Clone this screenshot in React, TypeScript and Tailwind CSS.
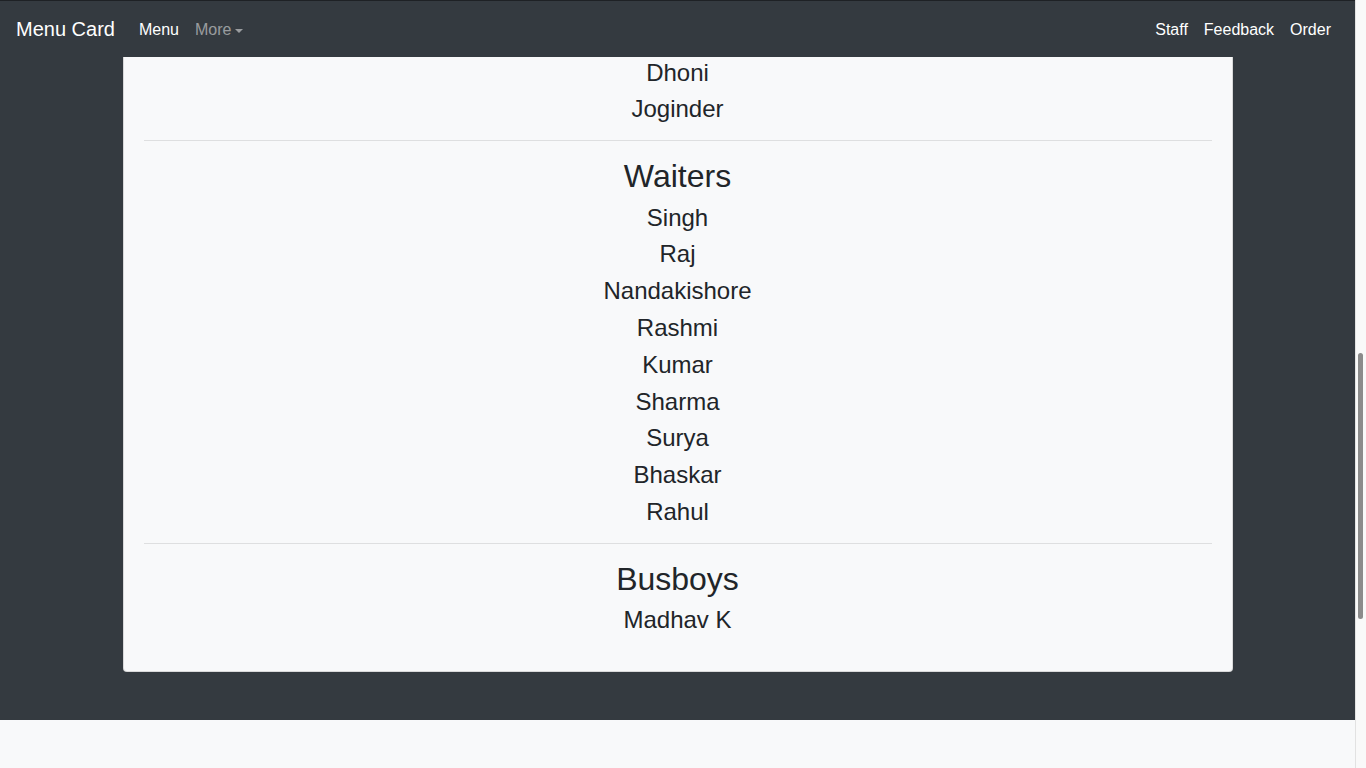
import React from "react";

const waiters = ["Singh", "Raj", "Nandakishore", "Rashmi", "Kumar", "Sharma", "Surya", "Bhaskar", "Rahul"];

function Name({ children }: { children: React.ReactNode }) {
  return <h4 className="mb-2 text-[24px] leading-[1.2] font-normal">{children}</h4>;
}

function Heading({ children }: { children: React.ReactNode }) {
  return <h2 className="mb-2 text-[32px] leading-[1.2] font-normal">{children}</h2>;
}

function Rule() {
  return <hr className="my-4 border-0 border-t border-t-[rgba(0,0,0,0.1)]" />;
}

export default function App() {
  return (
    <div
      className="flex h-screen w-full overflow-hidden bg-[#f8f9fa] text-[#212529]"
      style={{ fontFamily: '"Liberation Sans", Arial, Helvetica, sans-serif' }}
    >
      <div className="flex min-w-0 flex-1 flex-col">
        <nav className="relative z-10 flex h-[57px] shrink-0 items-center border-t border-t-[#1e2125] bg-[#343a40] pl-4 pr-4 pt-[2px]">
          <span className="mb-[3px] mr-4 text-[20px] leading-[1.5] text-white">Menu Card</span>
          <ul className="flex items-center">
            <li className="px-2 text-[16px] leading-[1.5] text-white">Menu</li>
            <li className="flex items-center px-2 text-[16px] leading-[1.5] text-[rgba(255,255,255,0.5)]">
              More
              <span className="ml-[4px] mt-[1px] h-0 w-0 border-x-[4.8px] border-t-[4.8px] border-x-transparent border-t-[rgba(255,255,255,0.5)]" />
            </li>
          </ul>
          <ul className="ml-auto flex items-center">
            <li className="px-2 text-[16px] leading-[1.5] text-white">Staff</li>
            <li className="px-2 text-[16px] leading-[1.5] text-white">Feedback</li>
            <li className="px-2 text-[16px] leading-[1.5] text-white">Order</li>
          </ul>
        </nav>
        <main className="shrink-0 bg-[#343a40] pb-12">
          <div className="mx-auto w-[1110px] rounded-b-[4px] border border-t-0 border-[rgba(0,0,0,0.125)] bg-[#f8f9fa] px-5 pb-5">
            <div className="pt-[1.6px] text-center">
              <div className="mb-4">
                <Name>Dhoni</Name>
                <Name>Joginder</Name>
              </div>
              <Rule />
              <Heading>Waiters</Heading>
              <div className="mb-4">
                {waiters.map((w) => (
                  <Name key={w}>{w}</Name>
                ))}
              </div>
              <Rule />
              <Heading>Busboys</Heading>
              <div className="mb-4">
                <Name>Madhav K</Name>
              </div>
            </div>
          </div>
        </main>
        <div className="flex-1 bg-[#f8f9fa]" />
      </div>
      <div className="relative w-[11px] shrink-0 border-l border-l-[#e2e2e2] bg-[#f9f9f9]">
        <div className="absolute left-[2px] top-[353px] h-[266px] w-[5px] rounded-full bg-[#8b8b8b]" />
      </div>
    </div>
  );
}
